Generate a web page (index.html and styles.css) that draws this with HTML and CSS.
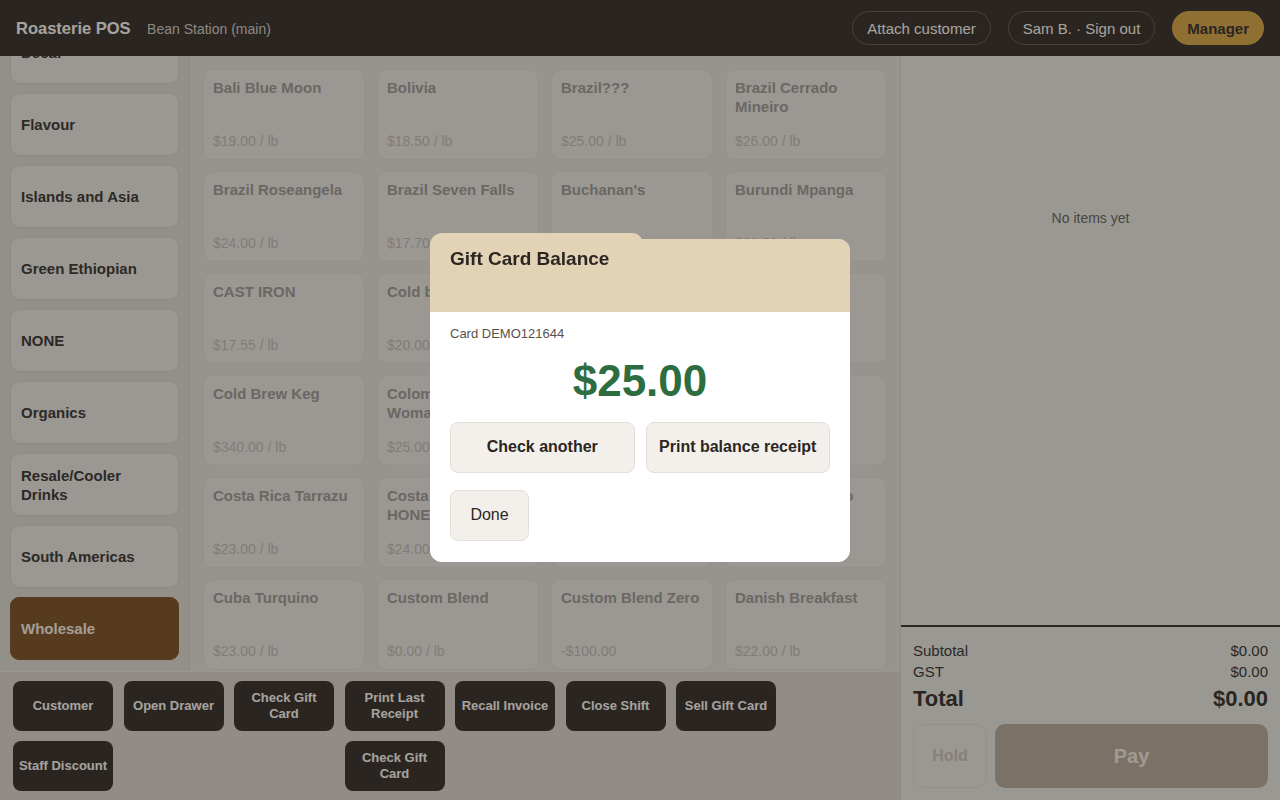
FILE: index.html
```html
<!DOCTYPE html>
<html lang="en">
<head>
  <meta charset="UTF-8">
  <title>Roasterie POS</title>
  <link rel="stylesheet" href="styles.css">
</head>
<body>

  <header class="topbar">
    <div class="brand">
      <span class="brand-name">Roasterie POS</span>
      <span class="brand-store">Bean Station (main)</span>
    </div>
    <div class="top-actions">
      <button class="pill">Attach customer</button>
      <button class="pill">Sam B. · Sign out</button>
      <button class="pill pill-gold">Manager</button>
    </div>
  </header>

  <div class="app">
    <div class="left">
      <div class="browse">
        <!-- Categories (scrolled) -->
        <nav class="sidebar">
          <div class="cat-list">
            <button class="cat">Decaf</button>
            <button class="cat">Flavour</button>
            <button class="cat">Islands and Asia</button>
            <button class="cat">Green Ethiopian</button>
            <button class="cat">NONE</button>
            <button class="cat">Organics</button>
            <button class="cat">Resale/Cooler Drinks</button>
            <button class="cat">South Americas</button>
            <button class="cat active">Wholesale</button>
          </div>
        </nav>

        <!-- Products -->
        <section class="products">
          <div class="card"><div class="card-name">Bali Blue Moon</div><div class="card-price">$19.00 / lb</div></div>
          <div class="card"><div class="card-name">Bolivia</div><div class="card-price">$18.50 / lb</div></div>
          <div class="card"><div class="card-name">Brazil???</div><div class="card-price">$25.00 / lb</div></div>
          <div class="card"><div class="card-name">Brazil Cerrado Mineiro</div><div class="card-price">$26.00 / lb</div></div>

          <div class="card"><div class="card-name">Brazil Roseangela</div><div class="card-price">$24.00 / lb</div></div>
          <div class="card"><div class="card-name">Brazil Seven Falls</div><div class="card-price">$17.70 / lb</div></div>
          <div class="card"><div class="card-name">Buchanan's</div><div class="card-price">$21.00 / lb</div></div>
          <div class="card"><div class="card-name">Burundi Mpanga</div><div class="card-price">$22.50 / lb</div></div>

          <div class="card"><div class="card-name">CAST IRON</div><div class="card-price">$17.55 / lb</div></div>
          <div class="card"><div class="card-name">Cold blend</div><div class="card-price">$20.00 / lb</div></div>
          <div class="card"><div class="card-name">Cold Brew Concentrate</div><div class="card-price">$18.00 / lb</div></div>
          <div class="card"><div class="card-name">Cold Brew Filter</div><div class="card-price">$19.50 / lb</div></div>

          <div class="card"><div class="card-name">Cold Brew Keg</div><div class="card-price">$340.00 / lb</div></div>
          <div class="card"><div class="card-name">Colombia Womankind</div><div class="card-price">$25.00 / lb</div></div>
          <div class="card"><div class="card-name">Colombia Supremo</div><div class="card-price">$22.00 / lb</div></div>
          <div class="card"><div class="card-name">Congo Kivu</div><div class="card-price">$24.50 / lb</div></div>

          <div class="card"><div class="card-name">Costa Rica Tarrazu</div><div class="card-price">$23.00 / lb</div></div>
          <div class="card"><div class="card-name">Costa Rica Tarrazu HONEY</div><div class="card-price">$24.00 / lb</div></div>
          <div class="card"><div class="card-name">Costa Rica Volcan</div><div class="card-price">$23.50 / lb</div></div>
          <div class="card"><div class="card-name">Crema Espresso</div><div class="card-price">$21.00 / lb</div></div>

          <div class="card"><div class="card-name">Cuba Turquino</div><div class="card-price">$23.00 / lb</div></div>
          <div class="card"><div class="card-name">Custom Blend</div><div class="card-price">$0.00 / lb</div></div>
          <div class="card"><div class="card-name">Custom Blend Zero</div><div class="card-price">-$100.00</div></div>
          <div class="card"><div class="card-name">Danish Breakfast</div><div class="card-price">$22.00 / lb</div></div>
        </section>
      </div>

      <!-- Quick actions -->
      <div class="quick">
        <button class="qbtn">Customer</button>
        <button class="qbtn">Open Drawer</button>
        <button class="qbtn">Check Gift Card</button>
        <button class="qbtn">Print Last Receipt</button>
        <button class="qbtn">Recall Invoice</button>
        <button class="qbtn">Close Shift</button>
        <button class="qbtn">Sell Gift Card</button>
        <button class="qbtn">Staff Discount</button>
        <button class="qbtn col-4">Check Gift Card</button>
      </div>
    </div>

    <!-- Cart -->
    <aside class="cart">
      <div class="cart-items">
        <div class="empty">No items yet</div>
      </div>
      <div class="totals">
        <div class="row"><span>Subtotal</span><span>$0.00</span></div>
        <div class="row"><span>GST</span><span>$0.00</span></div>
        <div class="row total"><span>Total</span><span>$0.00</span></div>
        <div class="pay-row">
          <button class="hold">Hold</button>
          <button class="pay">Pay</button>
        </div>
      </div>
    </aside>
  </div>

  <!-- Gift card modal -->
  <div class="overlay">
    <div class="modal">
      <div class="modal-head">
        <h2>Gift Card Balance</h2>
      </div>
      <div class="modal-body">
        <div class="card-no">Card DEMO121644</div>
        <div class="balance">$25.00</div>
        <div class="modal-actions">
          <button class="mbtn">Check another</button>
          <button class="mbtn">Print balance receipt</button>
        </div>
        <button class="mbtn done">Done</button>
      </div>
    </div>
  </div>

</body>
</html>
```

FILE: styles.css
```css
* { box-sizing: border-box; }

body {
  margin: 0;
  height: 100vh;
  overflow: hidden;
  background: #e8e2da;
  color: #453f39;
  font-family: "Liberation Sans", Arial, sans-serif;
  display: flex;
  flex-direction: column;
}

button {
  font-family: inherit;
  cursor: pointer;
}

/* Top bar */
.topbar {
  height: 56px;
  flex: none;
  background: #423a33;
  display: flex;
  align-items: center;
  justify-content: space-between;
  padding: 0 16px;
}

.brand-name {
  color: #fffaf2;
  font-size: 16.5px;
  font-weight: bold;
  margin-right: 12px;
}

.brand-store {
  color: #d8d0c6;
  font-size: 14px;
}

.top-actions {
  display: flex;
  gap: 17px;
}

.pill {
  height: 34px;
  padding: 0 14px;
  border-radius: 17px;
  border: 1px solid #6e655c;
  background: transparent;
  color: #fffaf2;
  font-size: 15px;
}

.pill-gold {
  background: #dcab4e;
  border-color: #dcab4e;
  color: #423a33;
  font-weight: bold;
}

/* Main */
.app {
  flex: 1;
  display: flex;
  min-height: 0;
}

.left {
  width: 900px;
  display: flex;
  flex-direction: column;
}

.browse {
  flex: 1;
  display: flex;
  min-height: 0;
}

.sidebar {
  width: 190px;
  background: #e2dcd3;
  border-right: 1px solid #ddd6cd;
  overflow: hidden;
}

.cat-list {
  display: flex;
  flex-direction: column;
  gap: 9px;
  padding: 10px;
  margin-top: -45px;
}

.cat {
  height: 63px;
  width: 169px;
  flex: none;
  text-align: left;
  padding: 0 10px;
  background: #eeeae4;
  border: 1px solid #dbd3c9;
  border-radius: 9px;
  color: #453f39;
  font-size: 15px;
  font-weight: bold;
  line-height: 19px;
}

.cat.active {
  background: #845b31;
  border-color: #845b31;
  color: #fdf0e2;
}

.products {
  flex: 1;
  overflow: hidden;
  padding: 13px;
  display: grid;
  grid-template-columns: repeat(4, 1fr);
  grid-auto-rows: 91px;
  column-gap: 12px;
  row-gap: 11px;
}

.card {
  background: #eeeae4;
  border: 1px solid #e3ddd5;
  border-radius: 10px;
  padding: 8px 9px 9px;
  display: flex;
  flex-direction: column;
  justify-content: space-between;
}

.card-name {
  color: #a59f97;
  font-size: 15px;
  font-weight: bold;
  line-height: 19px;
}

.card-price {
  color: #c6bfb6;
  font-size: 14px;
  line-height: 17px;
}

/* Quick actions */
.quick {
  height: 129px;
  flex: none;
  background: #dfd8ce;
  border-top: 1px solid #ebe6df;
  padding: 9px 13px;
  display: grid;
  grid-template-columns: repeat(7, 100px);
  grid-auto-rows: 50px;
  column-gap: 10.5px;
  row-gap: 10px;
}

.qbtn {
  background: #423a33;
  border: none;
  border-radius: 8px;
  color: #fffaf4;
  font-size: 13px;
  font-weight: bold;
  line-height: 16px;
  padding: 0 2px;
}

.col-4 { grid-column: 4; }

/* Cart */
.cart {
  flex: 1;
  background: #edeae2;
  border-left: 1px solid #dcd5cc;
  display: flex;
  flex-direction: column;
}

.cart-items {
  flex: 1;
}

.empty {
  padding-top: 153px;
  text-align: center;
  font-size: 14px;
  line-height: 18px;
  color: #726c64;
}

.totals {
  border-top: 2px solid #453d35;
  padding: 13px 12px 12px;
}

.row {
  display: flex;
  justify-content: space-between;
  font-size: 15px;
  line-height: 21px;
  color: #453f39;
}

.row.total {
  font-size: 22px;
  font-weight: bold;
  line-height: 28px;
  margin-top: 3px;
  color: #423a33;
}

.pay-row {
  display: flex;
  gap: 8px;
  margin-top: 11px;
}

.hold {
  width: 74px;
  height: 64px;
  background: #edeae2;
  border: 1px solid #e2ddd6;
  border-radius: 10px;
  color: #ccc5bc;
  font-size: 16px;
  font-weight: bold;
}

.pay {
  flex: 1;
  height: 64px;
  background: #bcae9e;
  border: none;
  border-radius: 10px;
  color: #f6ede1;
  font-size: 20px;
  font-weight: bold;
}

/* Modal */
.overlay {
  position: fixed;
  inset: 0;
  background: rgba(0, 0, 0, 0.35);
  display: flex;
  align-items: center;
  justify-content: center;
}

.modal {
  position: relative;
  width: 420px;
  height: 323px;
  background: #fff;
  border-radius: 12px;
}

.modal-head {
  position: relative;
  height: 73px;
  background: #e2d2b6;
  border-radius: 12px 12px 0 0;
  padding: 8px 20px 0;
}

.modal-head::before {
  content: "";
  position: absolute;
  top: -6px;
  left: 0;
  width: 213px;
  height: 20px;
  background: #e2d2b6;
  border-radius: 12px 11px 0 0;
}

.modal-head h2 {
  position: relative;
  margin: 0;
  font-size: 19px;
  line-height: 23px;
  color: #2b2621;
}

.modal-body {
  padding: 14px 20px 20px;
}

.card-no {
  font-size: 13px;
  line-height: 16px;
  color: #57524c;
}

.balance {
  margin: 14px 0 16px;
  text-align: center;
  font-size: 44px;
  line-height: 50px;
  font-weight: bold;
  color: #2e6d3f;
}

.modal-actions {
  display: grid;
  grid-template-columns: 1fr 1fr;
  gap: 11px;
  margin-bottom: 17px;
}

.mbtn {
  height: 51px;
  background: #f3f0eb;
  border: 1px solid #e3ded6;
  border-radius: 8px;
  color: #2b2621;
  font-size: 16px;
  font-weight: bold;
}

.mbtn.done {
  width: 79px;
  font-weight: normal;
}
```
